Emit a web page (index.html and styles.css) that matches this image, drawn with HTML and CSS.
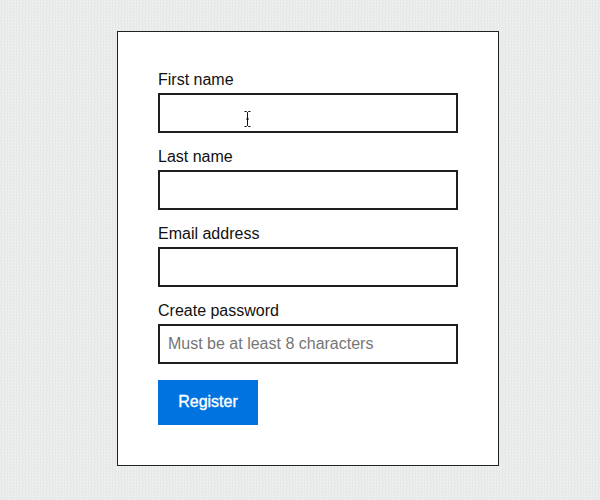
FILE: index.html
```html
<!DOCTYPE html>
<html lang="en">
<head>
<meta charset="utf-8">
<title>Register</title>
<link rel="stylesheet" href="styles.css">
</head>
<body>
<form class="card">
  <div class="field">
    <label class="label" for="first">First name</label>
    <div class="input-wrap">
      <input class="input" id="first" type="text">
      <svg class="ibeam" width="7" height="16" viewBox="0 0 7 16" aria-hidden="true">
        <path d="M0.5 0.5h2l1 1 1-1h2M0.5 15.5h2l1-1 1 1h2M3.5 1.5v13M2 8h3" fill="none" stroke="#111" stroke-width="1"/>
      </svg>
    </div>
  </div>
  <div class="field">
    <label class="label" for="last">Last name</label>
    <input class="input" id="last" type="text">
  </div>
  <div class="field">
    <label class="label" for="email">Email address</label>
    <input class="input" id="email" type="email">
  </div>
  <div class="field">
    <label class="label" for="pw">Create password</label>
    <input class="input" id="pw" type="password" placeholder="Must be at least 8 characters">
  </div>
  <button class="btn" type="button">Register</button>
</form>
</body>
</html>
```
FILE: styles.css
```css
html, body {
  margin: 0;
  padding: 0;
}
body {
  width: 600px;
  height: 500px;
  overflow: hidden;
  background-color: #eaebeb;
  background-image: conic-gradient(#e6e7e7 25%, #eeefef 25% 50%, #e6e7e7 50% 75%, #eeefef 75%);
  background-size: 3px 3px;
  font-family: "Liberation Sans", Arial, Helvetica, sans-serif;
  font-size: 16px;
  color: #111;
  display: flex;
  align-items: flex-start;
}
.card {
  box-sizing: border-box;
  width: 382px;
  height: 435px;
  margin: 31px 0 0 117px;
  padding: 39px 40px 40px 40px;
  background: #fff;
  border: 1px solid #222;
  display: flex;
  flex-direction: column;
  align-items: flex-start;
}
.field {
  display: flex;
  flex-direction: column;
  margin-bottom: 15px;
}
.label {
  line-height: 18px;
  margin-bottom: 4px;
  color: #111;
}
.input-wrap {
  position: relative;
}
.input {
  box-sizing: border-box;
  display: block;
  width: 300px;
  height: 40px;
  margin: 0;
  padding: 0 8px;
  border: 2px solid #1e1e1e;
  border-radius: 0;
  background: #fff;
  font-family: inherit;
  font-size: 16px;
  color: #111;
  outline: none;
}
.input::placeholder {
  color: #767676;
  opacity: 1;
}
.ibeam {
  position: absolute;
  left: 86px;
  top: 18px;
}
.btn {
  box-sizing: border-box;
  width: 100px;
  height: 45px;
  margin-top: 1px;
  padding: 0 0 1px;
  border: none;
  border-radius: 0;
  background: #0073e0;
  color: #fff;
  font-family: inherit;
  font-size: 16px;
  line-height: 18px;
  -webkit-text-stroke: 0.35px #fff;
  cursor: pointer;
}
```
